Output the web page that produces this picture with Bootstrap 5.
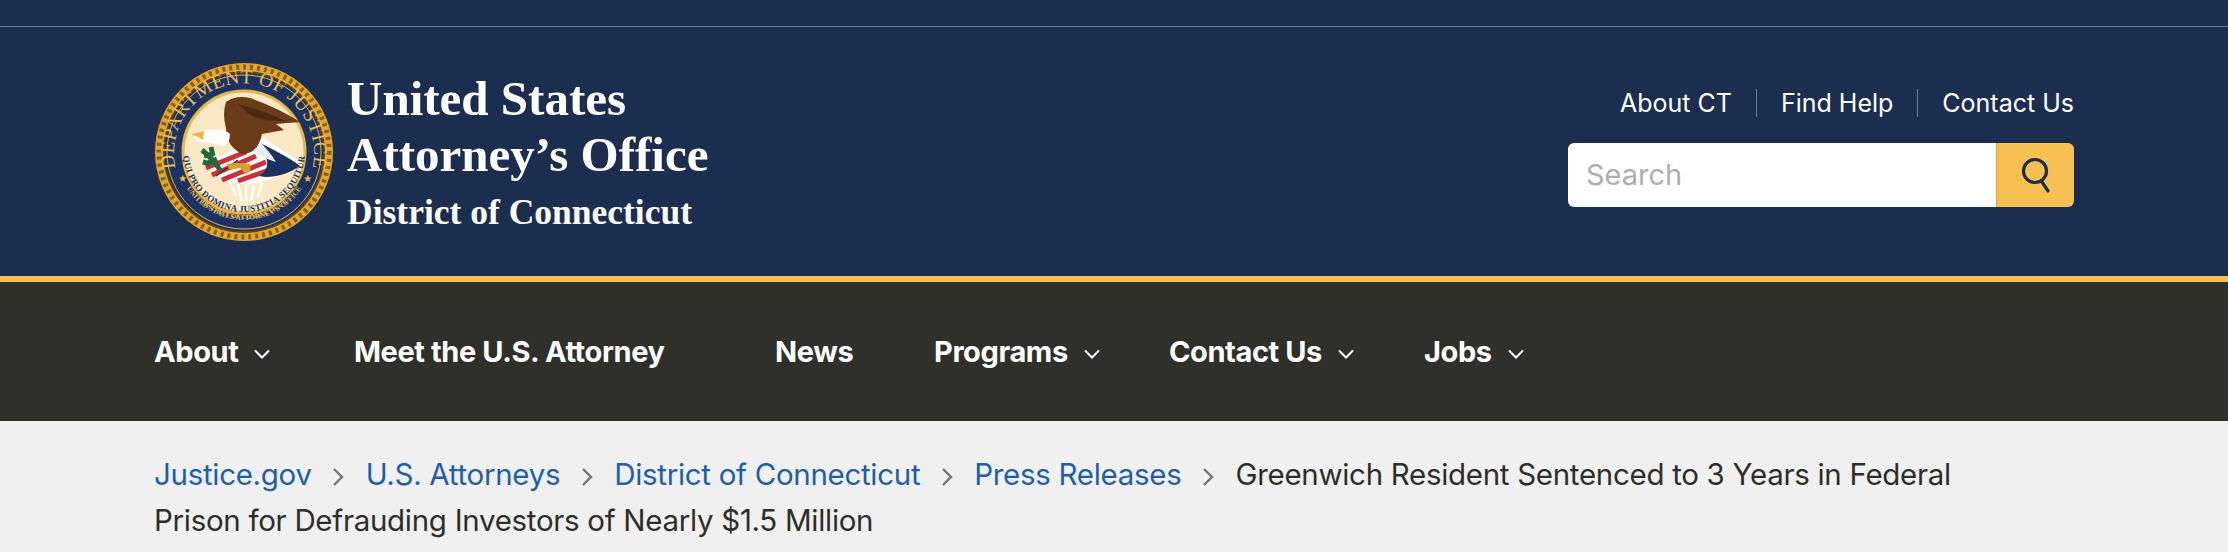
<!DOCTYPE html>
<html lang="en">
<head>
<meta charset="utf-8">
<title>United States Attorney's Office</title>
<link href="https://cdn.jsdelivr.net/npm/bootstrap@5.3.0/dist/css/bootstrap.min.css" rel="stylesheet">
<style>
html,body{height:552px;overflow:hidden}
body{background:#f0f0f0;font-family:"Inter","Liberation Sans",sans-serif}
.page-wrap{width:1920px;margin:0 auto}
.top-strip{height:27px;background:#1c2e4f;border-bottom:1px solid #6f7c93}
.site-head{height:249px;background:#1c2e4f}
.seal{width:180px;height:180px;flex:none}
.office{font-family:"Liberation Serif",serif;color:#fff;margin-left:13px;font-weight:700}
.office-main{font-size:49px;line-height:56px}
.office-sub{font-size:35.5px;line-height:42px;margin-top:8px}
.util-links{font-size:25px;line-height:28px;font-family:"Inter",sans-serif}
.util-links a{color:#fff;text-decoration:none;padding:0 24px;border-left:1px solid #6f7c93}
.util-links a:first-child{border-left:0}
.util-links a:last-child{padding-right:0}
.search-box{width:506px;height:64px;border-radius:6px;overflow:hidden;margin-top:26px}
.search-field{flex:1;background:#fff;color:#aeaeae;font-size:29px;padding-left:18px;font-family:"Inter",sans-serif}
.search-btn{width:78px;background:#f6c052;border-left:1px solid #d9a94a}
.gold-rule{height:6px;background:#f6c052}
.main-nav{height:139px;background:#30302b}
.main-nav a{color:#fff;font-weight:700;font-size:29px;text-decoration:none;white-space:nowrap;font-family:"Inter",sans-serif;letter-spacing:-.4px}
.nav-slot{flex:none}
.crumbs{font-size:29.5px;line-height:46px;padding-top:30px;color:#2e2e2a;font-family:"Inter",sans-serif;letter-spacing:-.3px}
.crumbs a{color:#1f5fa8;text-decoration:none}
.crumb-sep{display:inline-block;width:54px;text-align:center}
</style>
</head>
<body>
<div class="top-strip"></div>
<header class="site-head">
  <div class="page-wrap d-flex justify-content-between h-100">
    <div class="d-flex align-items-center">
      <svg class="seal" viewBox="0 0 180 180" role="img" aria-label="Department of Justice seal">
        <defs>
          <path id="arcTop" d="M22 108A70 70 0 1 1 158 108"/>
          <path id="arcBot1" d="M29 120A68 68 0 0 0 151 120"/>
          <path id="arcBot2" d="M41 134A64 64 0 0 0 139 134"/>
          <path id="arcMotto" d="M30 78A61 61 0 1 0 150 78"/>
        </defs>
        <circle cx="90" cy="90" r="89" fill="#e0a62e"/>
        <circle cx="90" cy="90" r="85" fill="none" stroke="#8a5f1a" stroke-width="5" stroke-dasharray="3 4"/>
        <circle cx="90" cy="90" r="80" fill="#1b3263" stroke="#5f421a" stroke-width="2"/>
        <circle cx="90" cy="90" r="77" fill="none" stroke="#e5b84c" stroke-width="1"/>
        <text font-family="Liberation Serif,serif" font-size="19.5" fill="#e8bd50" letter-spacing=".5"><textPath href="#arcTop" startOffset="50%" text-anchor="middle">DEPARTMENT OF JUSTICE</textPath></text>
        <text font-family="Liberation Serif,serif" font-size="7.4" font-weight="700" fill="#e8bd50"><textPath href="#arcBot1" startOffset="50%" text-anchor="middle">UNITED STATES ATTORNEY'S OFFICE</textPath></text>
        <text font-family="Liberation Serif,serif" font-size="6.6" font-weight="700" fill="#e8bd50"><textPath href="#arcBot2" startOffset="50%" text-anchor="middle">DISTRICT OF CONNECTICUT</textPath></text>
        <text x="24" y="120" font-size="9" fill="#e8bd50">★</text><text x="149" y="120" font-size="9" fill="#e8bd50">★</text>
        <circle cx="90" cy="90" r="61" fill="#fbe8c4" stroke="#e5b84c" stroke-width="3"/>
        <text font-family="Liberation Serif,serif" font-size="9" font-weight="700" fill="#1b3263" letter-spacing=".3"><textPath href="#arcMotto" startOffset="50%" text-anchor="middle">QUI PRO DOMINA JUSTITIA SEQUITUR</textPath></text>
        <path d="M50 100L110 76L146 100Q110 130 68 118Z" fill="#fff"/>
        <path d="M52 106L92 90M58 113L102 94M68 118L112 100M84 119L126 104" stroke="#c8323c" stroke-width="5" fill="none"/>
        <path d="M104 80Q135 95 146 104Q125 118 105 114Q122 104 104 80Z" fill="#1b3263"/>
        <path d="M100 74Q115 88 122 100Q108 96 98 88Z" fill="#e8edf2"/>
        <path d="M72 40Q82 33 96 36Q125 46 146 60L122 62L130 68L108 72Q104 92 88 92Q72 84 72 66Q68 52 72 40Z" fill="#6b3c18"/>
        <path d="M84 42Q108 48 134 60L112 58Q96 56 84 42Z" fill="#4c2a10"/>
        <path d="M40 76Q44 68 56 68Q70 66 76 72Q76 82 68 84Q54 80 48 80Q42 80 40 76Z" fill="#fff"/>
        <path d="M38 72L50 69L49 78Q42 74 38 72Z" fill="#e6b84a"/>
        <path d="M62 114L84 98" stroke="#3a2a12" stroke-width="1.5"/>
        <path d="M48 88Q60 98 66 108M50 94l9-2M54 101l9-4M57 85l2 9M49 100l8 2" stroke="#1f6a3a" stroke-width="5" fill="none"/>
        <path d="M72 102Q84 100 96 102Q98 110 92 112L86 106L76 108Z" fill="#d9a12c"/>
        <path d="M84 122L88 140M92 122L92 142M100 122L97 140M108 120L104 136M76 120L82 134" stroke="#fff" stroke-width="2.5"/>
      </svg>
      <div class="office">
        <div class="office-main">United States<br>Attorney’s Office</div>
        <div class="office-sub">District of Connecticut</div>
      </div>
    </div>
    <div class="d-flex flex-column align-items-end" style="padding-top:62px">
      <nav class="util-links d-flex"><a href="#">About CT</a><a href="#">Find Help</a><a href="#">Contact Us</a></nav>
      <div class="search-box d-flex">
        <div class="search-field d-flex align-items-center">Search</div>
        <div class="search-btn d-flex align-items-center justify-content-center">
          <svg width="30" height="36" viewBox="0 0 30 36" fill="none" stroke="#1c2e4f" stroke-width="3.2" stroke-linecap="round"><circle cx="14" cy="14" r="11.5"/><path d="M21 25l6 9"/></svg>
        </div>
      </div>
    </div>
  </div>
</header>
<div class="gold-rule"></div>
<nav class="main-nav">
  <div class="page-wrap d-flex align-items-center h-100">
    <a class="nav-slot" style="width:200px" href="#">About<svg class="ms-3" width="16" height="10" viewBox="0 0 16 10" fill="none" stroke="#fff" stroke-width="2"><path d="M1 1.5l7 7 7-7"/></svg></a>
    <a class="nav-slot" style="width:421px" href="#">Meet the U.S. Attorney</a>
    <a class="nav-slot" style="width:159px" href="#">News</a>
    <a class="nav-slot" style="width:235px" href="#">Programs<svg class="ms-3" width="16" height="10" viewBox="0 0 16 10" fill="none" stroke="#fff" stroke-width="2"><path d="M1 1.5l7 7 7-7"/></svg></a>
    <a class="nav-slot" style="width:255px" href="#">Contact Us<svg class="ms-3" width="16" height="10" viewBox="0 0 16 10" fill="none" stroke="#fff" stroke-width="2"><path d="M1 1.5l7 7 7-7"/></svg></a>
    <a class="nav-slot" href="#">Jobs<svg class="ms-3" width="16" height="10" viewBox="0 0 16 10" fill="none" stroke="#fff" stroke-width="2"><path d="M1 1.5l7 7 7-7"/></svg></a>
  </div>
</nav>
<div class="page-wrap crumbs">
  <a href="#">Justice.gov</a><span class="crumb-sep"><svg width="13" height="20" viewBox="0 0 13 20" fill="none" stroke="#757575" stroke-width="2.4"><path d="M2 2l8 8-8 8"/></svg></span><a href="#">U.S. Attorneys</a><span class="crumb-sep"><svg width="13" height="20" viewBox="0 0 13 20" fill="none" stroke="#757575" stroke-width="2.4"><path d="M2 2l8 8-8 8"/></svg></span><a href="#">District of Connecticut</a><span class="crumb-sep"><svg width="13" height="20" viewBox="0 0 13 20" fill="none" stroke="#757575" stroke-width="2.4"><path d="M2 2l8 8-8 8"/></svg></span><a href="#">Press Releases</a><span class="crumb-sep"><svg width="13" height="20" viewBox="0 0 13 20" fill="none" stroke="#757575" stroke-width="2.4"><path d="M2 2l8 8-8 8"/></svg></span>Greenwich Resident Sentenced to 3 Years in Federal<br>Prison for Defrauding Investors of Nearly $1.5 Million
</div>
</body>
</html>
